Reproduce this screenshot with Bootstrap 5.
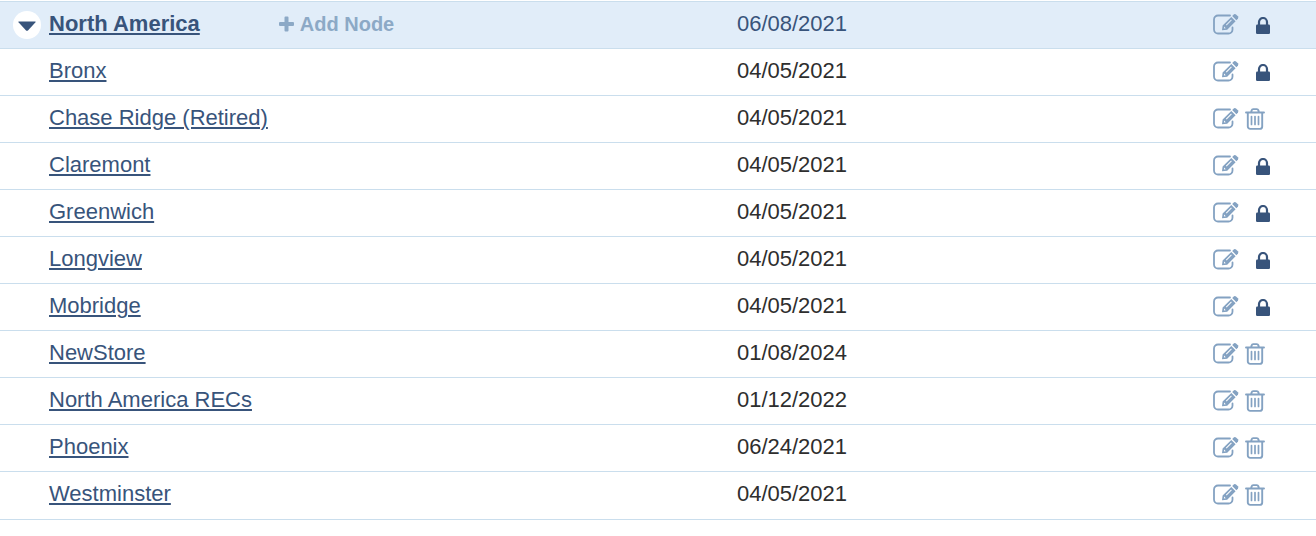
<!DOCTYPE html>
<html lang="en">
<head>
<meta charset="utf-8">
<meta name="viewport" content="width=device-width, initial-scale=1">
<title>Locations</title>
<link rel="stylesheet" href="https://cdn.jsdelivr.net/npm/bootstrap@5.3.0/dist/css/bootstrap.min.css">
<style>
  body { font-family: "Liberation Sans", Arial, sans-serif; font-size: 22px; line-height: 30px; color: #2e2e2e; background: #fff; padding-top: 1px; }
  .node-table { table-layout: fixed; border-top: 1px solid #cadeed; color: inherit; }
  .node-table > tbody > tr > * { padding: 7px 0 9px; border-bottom: 1px solid #cadeed; color: inherit; font-weight: 400; background: none; }
  .node-table > tbody > tr:last-child > * { padding-bottom: 10px; }
  .node-table > tbody > tr > th { padding-left: 49px; }
  .node-table > tbody > tr.parent-row { background: #e1edf9; color: #38547b; }
  .node-table > tbody > tr.parent-row > th { padding-left: 13px; }
  .name-col { width: 56%; }
  .action-col { width: 103px; }
  .node-link { color: #38547b; text-decoration: underline; text-decoration-thickness: 2px; text-underline-offset: 2px; }
  .parent-row .node-link { font-weight: 700; }
  .toggle { width: 28px; height: 28px; margin: 2px 8px 0 0; background: #fff; color: #38547b; }
  .toggle svg { margin-top: 2px; }
  .add-node { margin-left: 79px; color: #8ca9c6; font-weight: 700; font-size: 20px; gap: 6px; }
  .plain { border: 0; padding: 0; line-height: inherit; }
  .actions { height: 30px; }
  .edit, .trash { color: #84a2c2; }
  .lock { color: #38547b; margin-left: 17px; padding-top: 8px; }
  .trash { margin-left: 6px; padding-top: 5px; }
  svg { display: block; fill: currentColor; }
</style>
</head>
<body>
<svg class="d-none" aria-hidden="true">
  <symbol id="i-edit" viewBox="0 0 26 22">
    <path d="M17 2.500H5A4 4 0 0 0 1 6.500V16.500A4 4 0 0 0 5 20.500H15.500A4 4 0 0 0 19.500 16.500V14.500" fill="none" stroke="currentColor" stroke-width="1.800" stroke-linecap="round"/>
    <path fill-rule="evenodd" d="M18.300 4 22.600 8.200 14.200 16.700 9 17.300 9.600 12.500ZM11.100 13.600 10.900 15.500 12.800 15.200ZM18.100 6.500 12.900 11.700 13.600 12.400 18.800 7.200Z"/>
    <path d="M19.200 3.100 21 1.300Q22 .6 23 1.400L24.900 3.300Q25.700 4.300 25 5.400L23.400 7.200Z"/>
  </symbol>
  <symbol id="i-lock" viewBox="0 0 14 17">
    <path d="M3 8V5a4 4 0 0 1 8 0V8" fill="none" stroke="currentColor" stroke-width="2.200"/>
    <rect y="7.500" width="14" height="9.500" rx="1.200"/>
  </symbol>
  <symbol id="i-trash" viewBox="0 0 20 22">
    <path d="M1 4.500H19M6 4.500 6.600 2.400Q7 1.100 8.200 1.100H11.800Q13 1.100 13.400 2.400L14 4.500M2.800 4.500V18.500A2.400 2.400 0 0 0 5.200 20.900H14.800A2.400 2.400 0 0 0 17.200 18.500V4.500" fill="none" stroke="currentColor" stroke-width="1.900" stroke-linecap="round"/>
    <path d="M6.500 8.500V16.500M10 8.500V16.500M13.500 8.500V16.500" fill="none" stroke="currentColor" stroke-width="1.700" stroke-linecap="round"/>
  </symbol>
</svg>

<table class="table node-table mb-0 align-top">
  <colgroup><col class="name-col"><col><col class="action-col"></colgroup>
  <tbody id="nodes">
    <tr class="parent-row">
      <th scope="row">
        <div class="d-flex align-items-start">
          <button type="button" class="toggle plain rounded-circle d-flex align-items-center justify-content-center" aria-label="Collapse North America" aria-expanded="true">
            <svg width="18" height="10" viewBox="0 0 18 10"><path d="M.8 .5H17.200Q18 .5 17.500 1.300L10.200 9.300Q9 10.300 7.800 9.300L.5 1.300Q0 .5 .8 .5Z"/></svg>
          </button>
          <a class="node-link" href="#">North America</a>
          <button type="button" class="add-node plain bg-transparent d-flex align-items-center">
            <svg width="15" height="16" viewBox="0 0 15 16" aria-hidden="true"><path d="M6.500 .5h2q1 0 1 1V6H14q1 0 1 1v2q0 1-1 1H9.500v4.500q0 1-1 1h-2q-1 0-1-1V10H1Q0 10 0 9V7Q0 6 1 6h4.500V1.500q0-1 1-1Z"/></svg>
            Add Node
          </button>
        </div>
      </th>
      <td>06/08/2021</td>
      <td data-lock="North America"></td>
    </tr>
  </tbody>
</table>

<script src="https://cdn.jsdelivr.net/npm/bootstrap@5.3.0/dist/js/bootstrap.bundle.min.js"></script>
<script>
  const nodes = [
    ["Bronx", "04/05/2021", true],
    ["Chase Ridge (Retired)", "04/05/2021", false],
    ["Claremont", "04/05/2021", true],
    ["Greenwich", "04/05/2021", true],
    ["Longview", "04/05/2021", true],
    ["Mobridge", "04/05/2021", true],
    ["NewStore", "01/08/2024", false],
    ["North America RECs", "01/12/2022", false],
    ["Phoenix", "06/24/2021", false],
    ["Westminster", "04/05/2021", false]
  ];
  const actions = (name, locked) => `<div class="actions d-flex align-items-start">
    <button type="button" class="edit plain bg-transparent pt-1" aria-label="Edit ${name}"><svg width="26" height="22"><use href="#i-edit"/></svg></button>
    ${locked
      ? `<button type="button" class="lock plain bg-transparent" aria-label="${name} is locked"><svg width="14" height="17"><use href="#i-lock"/></svg></button>`
      : `<button type="button" class="trash plain bg-transparent" aria-label="Delete ${name}"><svg width="20" height="22"><use href="#i-trash"/></svg></button>`}
  </div>`;
  document.querySelector("[data-lock]").innerHTML = actions("North America", true);
  document.getElementById("nodes").insertAdjacentHTML("beforeend", nodes.map(([name, date, locked]) =>
    `<tr><th scope="row"><a class="node-link" href="#">${name}</a></th><td>${date}</td><td>${actions(name, locked)}</td></tr>`).join(""));
</script>
</body>
</html>
